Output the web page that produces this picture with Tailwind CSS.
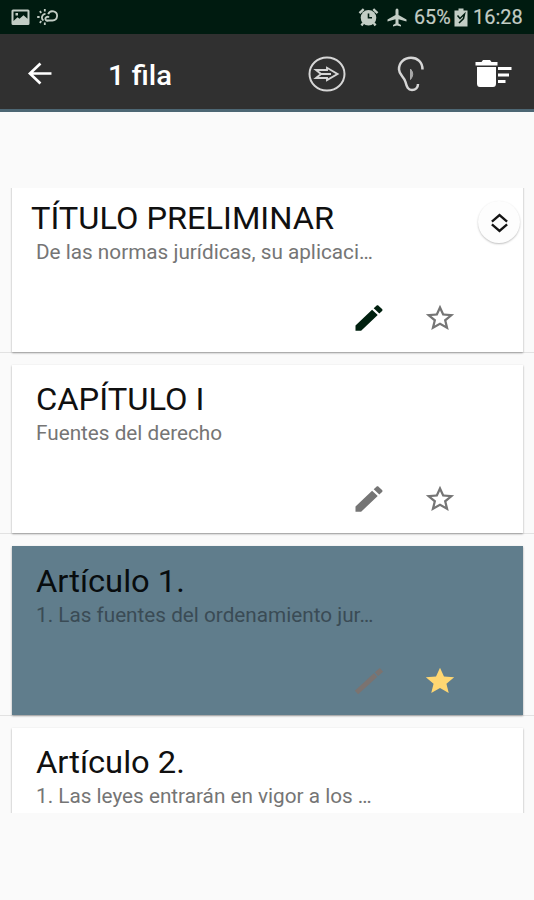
<!DOCTYPE html>
<html lang="es">
<head>
<meta charset="utf-8">
<title>1 fila</title>
<script src="https://cdn.jsdelivr.net/npm/@tailwindcss/browser@4"></script>
</head>
<body class="bg-[#fafafa] font-[Roboto,sans-serif]">
<svg class="hidden">
  <symbol id="pencil" viewBox="0 0 24 24" preserveAspectRatio="none"><path d="M3 17.25V21h3.75L17.81 9.94l-3.75-3.75L3 17.25zM20.71 7.04c.39-.39.39-1.02 0-1.41l-2.34-2.34c-.39-.39-1.02-.39-1.41 0l-1.83 1.83 3.75 3.75 1.83-1.83z"/></symbol>
  <symbol id="star-o" viewBox="0 0 24 24" preserveAspectRatio="none"><path d="M22 9.24l-7.19-.62L12 2 9.19 8.63 2 9.24l5.46 4.73L5.82 21 12 17.27 18.18 21l-1.63-7.03L22 9.24zM12 15.4l-3.76 2.27 1-4.28-3.32-2.88 4.38-.38L12 6.1l1.71 4.04 4.38.38-3.32 2.88 1 4.28L12 15.4z"/></symbol>
  <symbol id="star" viewBox="0 0 24 24" preserveAspectRatio="none"><path d="M12 17.27L18.18 21l-1.64-7.03L22 9.24l-7.19-.61L12 2 9.19 8.63 2 9.24l5.46 4.73L5.82 21z"/></symbol>
</svg>
<div class="relative flex h-[900px] w-[534px] flex-col overflow-hidden">
  <div class="flex h-[34px] shrink-0 items-center bg-[#001b10] pl-[11px] text-[#c3cdc5]">
    <svg class="h-[17px] w-[19px]" viewBox="0 0 19 17"><path fill="currentColor" fill-rule="evenodd" d="M2 0.500H17Q18.500 .500 18.500 2V14.500Q18.500 16 17 16H2Q.500 16 .500 14.500V2Q.500 .500 2 .500ZM2.500 2.500V12L6.500 8.200 8.500 9.800 12.500 6.200 16.500 9.800V2.500ZM4.500 4H7V6.500H4.500Z"/></svg>
    <svg class="ml-[6px] h-[18px] w-[22px]" viewBox="0 0 22 18" fill="none" stroke="currentColor" stroke-width="1.800"><path d="M10.300 12.500H16.500A4.600 4.600 0 1 0 12.200 6.200M13 9.500A2 2 0 1 0 12.500 12.500M9.500 5.800A3.700 3.700 0 0 0 7.500 12.500"/><path d="M8.800 1V3.500M3.800 3.200 5.300 4.800M1.200 9H3.600M3.800 14.800 5.300 13.200M8.800 14.600V17"/></svg>
    <svg class="ml-[300px] h-[19px] w-[21px]" viewBox="0 0 20 19"><circle cx="10" cy="9.700" r="7.800" fill="currentColor"/><path d="M1 5.200 5.200 1.200M19 5.200 14.800 1.200M4.800 14.800 3 17.500M15.200 14.800 17 17.500" stroke="currentColor" stroke-width="2.400"/><path d="M10 5.500V9.800H13.500" fill="none" stroke="#001b10" stroke-width="1.600"/></svg>
    <svg class="ml-[8px] h-[19px] w-[20px]" viewBox="0 0 20 19"><path fill="currentColor" d="M10 .500Q11.500 .500 11.500 2.500V7L19.500 11.500V13.500L11.500 11.200V15.500L14 17V18.500L10 17.500 6 18.500V17L8.500 15.500V11.200L.500 13.500V11.500L8.500 7V2.500Q8.500 .500 10 .500Z"/></svg>
    <span class="ml-[7px] w-[38px] whitespace-nowrap pt-px text-[21px] leading-none"><span class="inline-block origin-left scale-x-[0.940] [-webkit-text-stroke:0.2px]">65%</span></span>
    <svg class="ml-[2px] h-[19px] w-[14px]" viewBox="0 0 14 19"><path fill="currentColor" d="M4.500 .500H9.500V2.500H13.500V18.500H.500V2.500H4.500Z"/><path fill="none" stroke="#001b10" stroke-width="1.500" d="M3.500 7.500 6 10.500 10.500 6 9.500 10.500 5 15"/></svg>
    <span class="ml-[5px] whitespace-nowrap pt-px text-[21px] leading-none"><span class="inline-block origin-left scale-x-[0.950] [-webkit-text-stroke:0.2px]">16:28</span></span>
  </div>
  <div class="flex h-[78px] shrink-0 items-center border-b-[3px] border-[#4d6774] bg-[#303030] pl-[27px] pt-[4px] text-white">
    <svg class="h-[23px] w-[25px]" viewBox="0 0 26 24" fill="none" stroke="currentColor" stroke-width="2.800"><path d="M25.500 12H3M14 1.500 3 12 14 22.500"/></svg>
    <h1 class="ml-[56px] w-[64px] whitespace-nowrap pt-[4px] text-[27px] font-medium leading-[34px]"><span class="inline-block origin-left scale-x-[1.080]">1 fila</span></h1>
    <svg class="ml-[136px] h-[36px] w-[38px]" viewBox="0 0 38 36" fill="none" stroke="#d6d6d6"><ellipse cx="19" cy="18" rx="17.500" ry="16.500" stroke-width="2"/><path stroke-width="1.900" d="M8 14H19V11.800L29.500 18 19 24V22H8L13 18ZM13 18H23"/></svg>
    <svg class="ml-[51px] h-[36px] w-[28px]" viewBox="0 0 28 36" fill="none" stroke="#d6d6d6" stroke-width="2.500"><path d="M25.500 13.500C25.500 6 20.500 1.800 14 1.800 7 1.800 1.800 7 2 13.500 2.200 19 7 20.500 8.500 26 9.800 31 11 34 15 34 18.500 34 21 31.500 21 28"/><path d="M13.500 13Q18 18 13.500 23.500Z" fill="#a8a8a8" stroke="#a8a8a8" stroke-width="1"/></svg>
    <svg class="ml-[50px] h-[28px] w-[37px]" viewBox="0 0 37 28" fill="currentColor"><path d="M.500 2H6.500L8 0H15L16.500 2H22.500V5.500H.500ZM2 7H21V23.500Q21 27 18 27H5Q2 27 2 23.500ZM23 7H36.500V10H23ZM23 13.500H34V16.500H23ZM23 20H30.500V23H23Z"/></svg>
  </div>
  <main class="mt-[76px] flex h-[625px] shrink-0 flex-col overflow-hidden">
    <div class="-mt-[17px] h-[182px] shrink-0 border-b border-[#e2e2e2] pl-[12px] pr-[11px] pt-[12px]">
      <article class="h-[169px] bg-white pt-[18px] shadow-[0_1px_2px_rgba(0,0,0,0.350)]">
        <h2 class="ml-[19px] origin-left scale-x-[1.034] whitespace-nowrap text-[31.500px] leading-[36px] text-[#101010]">TÍTULO PRELIMINAR</h2>
        <p class="ml-[24px] mt-[1px] origin-left scale-x-[1.036] whitespace-nowrap text-[20px] leading-[28px] text-[#757575]">De las normas jurídicas, su aplicaci…</p>
        <div class="mt-[35px] flex items-center pl-[339px]"><svg class="h-[34px] w-[36px] fill-[#00200f]"><use href="#pencil"/></svg><svg class="ml-[36px] h-[32px] w-[34px] fill-[#757575]"><use href="#star-o"/></svg></div>
      </article>
    </div>
    <div class="h-[181px] shrink-0 border-b border-[#e2e2e2] pl-[12px] pr-[11px] pt-[12px]">
      <article class="h-[168px] bg-white pt-[17px] shadow-[0_1px_2px_rgba(0,0,0,0.350)]">
        <h2 class="ml-[24px] origin-left scale-x-[1.038] whitespace-nowrap text-[31.500px] leading-[36px] text-[#101010]">CAPÍTULO I</h2>
        <p class="ml-[24px] mt-[1px] origin-left scale-x-[1.036] whitespace-nowrap text-[20px] leading-[28px] text-[#757575]">Fuentes del derecho</p>
        <div class="mt-[35px] flex items-center pl-[339px]"><svg class="h-[34px] w-[36px] fill-[#757575]"><use href="#pencil"/></svg><svg class="ml-[36px] h-[32px] w-[34px] fill-[#757575]"><use href="#star-o"/></svg></div>
      </article>
    </div>
    <div class="h-[182px] shrink-0 border-b border-[#e2e2e2] pl-[12px] pr-[11px] pt-[12px]">
      <article class="h-[169px] bg-[#607d8c] pt-[18px] shadow-[0_1px_2px_rgba(0,0,0,0.350)]">
        <h2 class="ml-[24px] origin-left scale-x-[1.038] whitespace-nowrap text-[31.500px] leading-[36px] text-[#080c0e]">Artículo 1.</h2>
        <p class="ml-[24px] mt-[1px] origin-left scale-x-[1.036] whitespace-nowrap text-[20px] leading-[28px] text-[#3a4b55]">1. Las fuentes del ordenamiento jur…</p>
        <div class="mt-[35px] flex items-center pl-[339px]"><svg class="h-[34px] w-[36px]" viewBox="0 0 36 34" fill="none" stroke="#7b7370" stroke-width="5"><path d="M5.500 28.500 24.500 11.200M25.500 10.200 30.500 5.800"/></svg><svg class="ml-[36px] h-[32px] w-[34px] fill-[#ffd772]"><use href="#star"/></svg></div>
      </article>
    </div>
    <div class="h-[181px] shrink-0 pl-[12px] pr-[11px] pt-[12px]">
      <article class="h-[168px] bg-white pt-[17px] shadow-[0_1px_2px_rgba(0,0,0,0.350)]">
        <h2 class="ml-[24px] origin-left scale-x-[1.038] whitespace-nowrap text-[31.500px] leading-[36px] text-[#101010]">Artículo 2.</h2>
        <p class="ml-[24px] mt-[1px] origin-left scale-x-[1.036] whitespace-nowrap text-[20px] leading-[28px] text-[#757575]">1. Las leyes entrarán en vigor a los …</p>
      </article>
    </div>
  </main>
  <button class="absolute left-[478px] top-[201px] flex size-[42px] items-center justify-center rounded-full bg-[#fdfdfd] pt-px shadow-[0_1px_2px_rgba(0,0,0,0.250)]" aria-label="Desplazar">
    <svg class="h-[20px] w-[19px]" viewBox="0 0 20 21" fill="none" stroke="#151515" stroke-width="2.500"><path d="M2 9 10 2.200 18 9M2 12 10 18.800 18 12"/></svg>
  </button>
</div>
</body>
</html>
